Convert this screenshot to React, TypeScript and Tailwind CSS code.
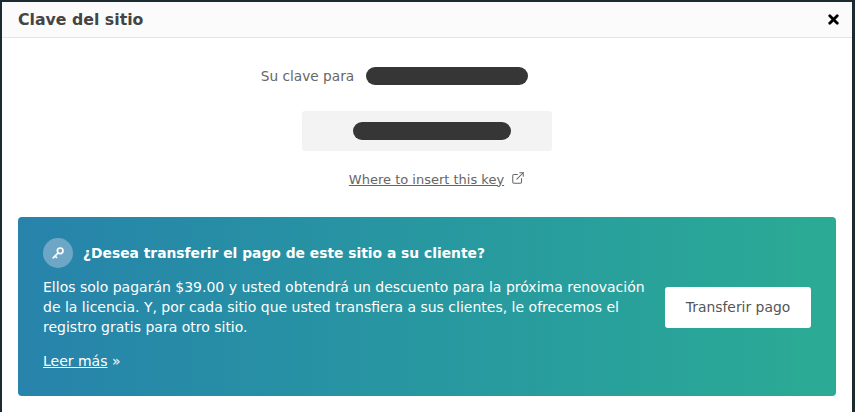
import React from 'react';
import { ExternalLink, X } from 'lucide-react';

export default function App() {
  return (
    <div className="h-[412px] w-[855px] overflow-hidden bg-[#1c2b30] pl-[2px] pr-[3px] pt-[2px] font-['DejaVu_Sans',sans-serif]">
      <div className="h-[410px] bg-white">
        {/* Header */}
        <div className="flex h-[36px] items-center justify-between border-b border-[#e4e4e4] bg-[#fbfbfb] pl-[16px] pr-[11px]">
          <h1 className="pt-[1px] text-[15.75px] font-bold text-[#444444]">Clave del sitio</h1>
          <button className="text-black">
            <X className="h-[15px] w-[15px]" strokeWidth={4.5} />
          </button>
        </div>

        <div className="flex flex-col items-center pt-[28px]">
          <div className="flex items-center gap-[12px] pr-[65px]">
            <span className="text-[13.7px] text-[#666666]">Su clave para</span>
            <div className="h-[18px] w-[162px] rounded-full bg-[#363636]" />
          </div>

          <div className="mt-[24px] flex h-[40px] w-[250px] items-center justify-center rounded-[3px] bg-[#f3f3f3] pl-[9px]">
            <div className="h-[18px] w-[158px] rounded-full bg-[#363636]" />
          </div>

          <div className="mt-[19px] flex items-center gap-[7px] pl-[20px] text-[#666666]">
            <a className="text-[13px] underline">Where to insert this key</a>
            <ExternalLink className="mb-[3px] h-[14px] w-[14px]" strokeWidth={1.75} />
          </div>
        </div>

        {/* Transfer banner */}
        <div className="mx-[16px] mt-[28px] flex h-[179px] justify-between rounded-[4px] bg-gradient-to-r from-[#2783ab] to-[#2bab94] pl-[25px] pr-[25px] pt-[21px] text-white">
          <div className="w-[610px]">
            <div className="flex items-center gap-[10px]">
              <div className="flex h-[30px] w-[30px] items-center justify-center rounded-full bg-[#6ea6c6]">
                <svg viewBox="0 0 16 16" className="h-[16px] w-[16px]" fill="none" stroke="white" strokeWidth="1.7" strokeLinecap="round">
                  <circle cx="10.2" cy="5.8" r="2.8" />
                  <path d="M8.2 7.8 3.2 12.8M5 11l1.4 1.4" />
                </svg>
              </div>
              <h2 className="text-[13.85px] font-bold">¿Desea transferir el pago de este sitio a su cliente?</h2>
            </div>
            <p className="mt-[9px] text-[14px] leading-[20px]">
              Ellos solo pagarán $39.00 y usted obtendrá un descuento para la próxima renovación de la licencia. Y, por cada sitio que usted transfiera a sus clientes, le ofrecemos el registro gratis para otro sitio.
            </p>
            <p className="mt-[14px] text-[14px] leading-[20px]">
              <a className="underline">Leer más</a> »
            </p>
          </div>
          <button className="mt-[49px] h-[41px] w-[146px] rounded-[3px] bg-white text-[13.9px] text-[#555555]">Transferir pago</button>
        </div>
      </div>
    </div>
  );
}
